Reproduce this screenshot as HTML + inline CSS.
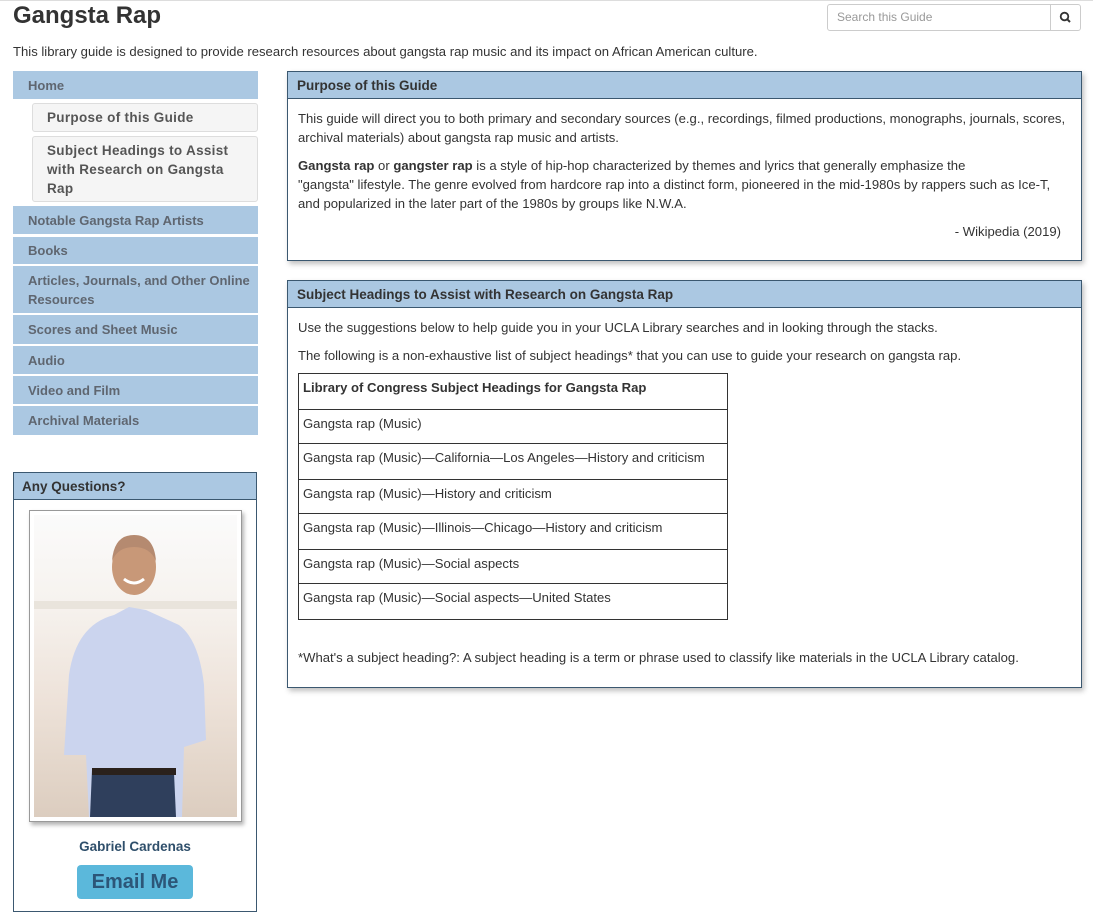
<!DOCTYPE html>
<html><head><meta charset="utf-8"><style>
*{box-sizing:border-box;margin:0;padding:0}
body{width:1093px;height:900px;overflow:hidden;background:#fff;font-family:"Liberation Sans",Arial,sans-serif;color:#333;font-size:13px;position:relative}
.a{position:absolute}
h1{position:absolute;left:13px;top:2px;font-size:24px;font-weight:bold;color:#333}
.nav{position:absolute;left:13px;width:245px;background:#abc8e2;color:#5f6670;font-weight:bold;font-size:13px;padding-left:15px;display:flex;align-items:center;line-height:19px}
.sub{position:absolute;left:32px;width:226px;background:#f5f5f5;border:1px solid #ddd;border-radius:3px;color:#555;font-weight:bold;font-size:13.5px;padding:0 14px;line-height:19px;display:flex;align-items:center;letter-spacing:.3px}
.panel{position:absolute;left:287px;width:795px;border:1px solid #3b5870;box-shadow:2px 3px 5px rgba(0,0,0,.25);background:#fff}
.ph{background:#abc8e2;border-bottom:1px solid #3b5870;height:27px;padding-left:9px;line-height:27px;font-weight:bold;color:#333;font-size:13.5px}
.pb{padding:10px 10px;line-height:19px;font-size:13.1px}
table{border-collapse:collapse;width:430px;font-size:13.1px}
td{border:1px solid #333;padding:0 4px;vertical-align:top;padding-top:4px}
</style></head><body>
<div class="a" style="left:0;top:0;width:1093px;height:1px;background:#ddd"></div>
<h1>Gangsta Rap</h1>
<div class="a" style="left:827px;top:4px;width:254px;height:27px;border:1px solid #ccc;border-radius:3px"></div>
<div class="a" style="left:837px;top:10px;color:#999;font-size:12px">Search this Guide</div>
<div class="a" style="left:1050px;top:4px;width:1px;height:27px;background:#ccc"></div>
<svg class="a" style="left:1059px;top:11px" width="13" height="13" viewBox="0 0 13 13"><circle cx="5.5" cy="5.5" r="3.8" fill="none" stroke="#333" stroke-width="1.8"/><line x1="8.3" y1="8.3" x2="11" y2="11" stroke="#333" stroke-width="2"/></svg>
<div class="a" style="left:13px;top:44px;font-size:13.1px">This library guide is designed to provide research resources about gangsta rap music and its impact on African American culture.</div>

<div class="nav" style="top:71px;height:28px">Home</div>
<div class="sub" style="top:103px;height:29px">Purpose of this Guide</div>
<div class="sub" style="top:136px;height:66px">Subject Headings to Assist with Research on Gangsta Rap</div>
<div class="nav" style="top:206px;height:28px">Notable Gangsta Rap Artists</div>
<div class="nav" style="top:237px;height:27px">Books</div>
<div class="nav" style="top:266px;height:47px">Articles, Journals, and Other Online Resources</div>
<div class="nav" style="top:315px;height:29px">Scores and Sheet Music</div>
<div class="nav" style="top:346px;height:28px">Audio</div>
<div class="nav" style="top:376px;height:28px">Video and Film</div>
<div class="nav" style="top:406px;height:29px">Archival Materials</div>

<div class="a" style="left:13px;top:472px;width:244px;height:440px;border:1px solid #3b5870">
<div class="ph" style="padding-left:8px">Any Questions?</div>
</div>
<div class="a" style="left:29px;top:510px;width:213px;height:312px;border:1px solid #999;background:#fff;box-shadow:2px 3px 4px rgba(0,0,0,.3);padding:4px">
<svg width="203" height="302" viewBox="0 0 203 302">
<defs><linearGradient id="bg" x1="0" y1="0" x2="0" y2="1"><stop offset="0" stop-color="#fbfbfb"/><stop offset=".3" stop-color="#f6f2ee"/><stop offset=".6" stop-color="#eee3da"/><stop offset="1" stop-color="#dccdbf"/></linearGradient></defs>
<rect width="203" height="302" fill="url(#bg)"/>
<rect y="86" width="203" height="8" fill="#e9e4dc"/>
<path d="M30 240 L35 160 Q42 110 80 100 L95 92 L112 95 L145 110 Q165 125 170 170 L172 225 L150 232 L148 302 L55 302 L52 240Z" fill="#cbd4ee"/>
<path d="M58 255 L140 258 L142 302 L56 302Z" fill="#2f3f5c"/>
<rect x="58" y="253" width="84" height="7" fill="#2a211c"/>
<ellipse cx="100" cy="52" rx="22" ry="28" fill="#c89878"/>
<path d="M78 46 Q80 20 100 20 Q120 20 122 46 Q116 32 100 32 Q84 32 78 46Z" fill="#b58a70"/>
<path d="M90 64 Q100 72 110 64" stroke="#fff" stroke-width="3" fill="none"/>
</svg>
</div>
<div class="a" style="left:13px;top:839px;width:244px;text-align:center;font-weight:bold;color:#2f4f6b;font-size:13.5px">Gabriel Cardenas</div>
<div class="a" style="left:77px;top:865px;width:116px;height:34px;background:#5bb8db;border-radius:4px;text-align:center;line-height:34px;font-weight:bold;font-size:20px;color:#2c5678">Email Me</div>

<div class="panel" style="top:71px;height:190px">
<div class="ph">Purpose of this Guide</div>
<div class="pb">
<p>This guide will direct you to both primary and secondary sources (e.g., recordings, filmed productions, monographs, journals, scores, archival materials) about gangsta rap music and artists.</p>
<p style="margin-top:9px"><b>Gangsta rap</b> or <b>gangster rap</b> is a style of hip-hop characterized by themes and lyrics that generally emphasize the<br>"gangsta" lifestyle. The genre evolved from hardcore rap into a distinct form, pioneered in the mid-1980s by rappers such as Ice-T,<br>and popularized in the later part of the 1980s by groups like N.W.A.</p>
<p style="text-align:right;margin-top:9px;padding-right:10px">- Wikipedia (2019)</p>
</div></div>

<div class="panel" style="top:280px;height:408px">
<div class="ph">Subject Headings to Assist with Research on Gangsta Rap</div>
<div class="pb">
<p>Use the suggestions below to help guide you in your UCLA Library searches and in looking through the stacks.</p>
<p style="margin-top:9px">The following is a non-exhaustive list of subject headings* that you can use to guide your research on gangsta rap.</p>
<table style="margin-top:8px">
<tr style="height:36px"><td><b>Library of Congress Subject Headings for Gangsta Rap</b></td></tr>
<tr style="height:34px"><td>Gangsta rap (Music)</td></tr>
<tr style="height:36px"><td>Gangsta rap (Music)—California—Los Angeles—History and criticism</td></tr>
<tr style="height:34px"><td>Gangsta rap (Music)—History and criticism</td></tr>
<tr style="height:36px"><td>Gangsta rap (Music)—Illinois—Chicago—History and criticism</td></tr>
<tr style="height:34px"><td>Gangsta rap (Music)—Social aspects</td></tr>
<tr style="height:36px"><td>Gangsta rap (Music)—Social aspects—United States</td></tr>
</table>
<p style="margin-top:28px">*What's a subject heading?: A subject heading is a term or phrase used to classify like materials in the UCLA Library catalog.</p>
</div></div>
</body></html>
